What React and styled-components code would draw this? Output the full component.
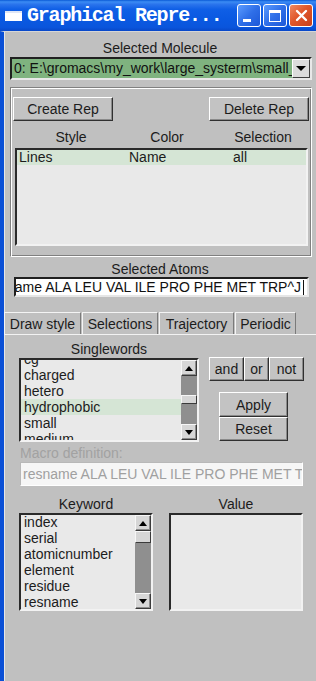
import React from "react";
import styled, { createGlobalStyle } from "styled-components";

const Global = createGlobalStyle`
  html, body { margin: 0; padding: 0; background: #c0c0c0; }
  body { font-family: "Liberation Sans", Arial, sans-serif; font-size: 14px; color: #1c1c1c; }
  * { box-sizing: border-box; }
`;

const Window = styled.div`
  width: 316px;
  height: 681px;
  display: flex;
  flex-direction: column;
  overflow: hidden;
`;

const TitleBar = styled.div`
  height: 31px;
  flex: none;
  display: flex;
  align-items: center;
  padding: 0 3px 0 5px;
  background: linear-gradient(
    to bottom,
    #0a5ad6 0%,
    #3b8cf4 6%,
    #2a74ec 14%,
    #0f5fe6 30%,
    #0a59e2 60%,
    #0a55dc 88%,
    #0848c8 100%
  );
`;

const AppIcon = styled.div`
  width: 17px;
  height: 10px;
  flex: none;
  margin-right: 5px;
  background: #ffffff;
  border-top: 2px solid #dfe6f5;
`;

const Title = styled.div`
  flex: 1;
  font-family: "Liberation Mono", "Courier New", monospace;
  font-weight: bold;
  font-size: 20px;
  letter-spacing: -1.2px;
  color: #ffffff;
  white-space: nowrap;
  overflow: hidden;
`;

const CapButtons = styled.div`
  display: flex;
  gap: 2px;
`;

const CapButton = styled.div`
  width: 24px;
  height: 23px;
  border: 1px solid #ffffff;
  border-radius: 3px;
  display: flex;
  align-items: ${(p) => (p.$kind === "min" ? "flex-end" : "center")};
  justify-content: ${(p) => (p.$kind === "min" ? "flex-start" : "center")};
  padding: ${(p) => (p.$kind === "min" ? "0 0 4px 5px" : "0")};
  background: ${(p) =>
    p.$kind === "close"
      ? "linear-gradient(135deg, #f08a62 0%, #e0572b 45%, #c8401c 100%)"
      : "linear-gradient(135deg, #5c9cff 0%, #2f6fe8 50%, #1d58d8 100%)"};
`;

const MinBar = styled.div`
  width: 8px;
  height: 3px;
  background: #ffffff;
`;

const MaxBox = styled.div`
  width: 12px;
  height: 12px;
  border: 1px solid #ffffff;
  border-top-width: 3px;
`;

const Body = styled.div`
  flex: 1;
  display: flex;
  flex-direction: column;
  background: #c0c0c0;
  border-left: 4px solid #0a4fd6;
  border-top: 1px solid #d6d6d6;
  box-shadow: inset 1px 0 0 #e6e6e6;
`;

const Label = styled.div`
  height: 16px;
  line-height: 16px;
  text-align: ${(p) => (p.$left ? "left" : "center")};
  color: ${(p) => (p.$muted ? "#a2a2a2" : "#1c1c1c")};
  margin-top: ${(p) => p.$mt || 0}px;
  margin-left: ${(p) => p.$ml || 0}px;
  white-space: nowrap;
`;

const Dropdown = styled.div`
  height: 23px;
  margin: 1px 4px 0 6px;
  display: flex;
  background: #7fb37f;
  border: 2px solid;
  border-color: #202020 #e8e8e8 #e8e8e8 #202020;
`;

const DropText = styled.div`
  flex: 1;
  padding-left: 2px;
  line-height: 19px;
  white-space: nowrap;
  overflow: hidden;
  color: #111;
`;

const DropArrow = styled.div`
  width: 18px;
  flex: none;
  background: #dcdcdc;
  border: 1px solid;
  border-color: #ffffff #404040 #404040 #ffffff;
  display: flex;
  align-items: center;
  justify-content: center;
  &::after {
    content: "";
    border-left: 5px solid transparent;
    border-right: 5px solid transparent;
    border-top: 5px solid #000;
  }
`;

const Frame = styled.div`
  margin: 7px 4px 0 6px;
  padding: 9px 2px 10px 2px;
  border: 1px solid;
  border-color: #808080 #ffffff #ffffff #808080;
  box-shadow: inset 1px 1px 0 #ffffff, inset -1px -1px 0 #808080;
  display: flex;
  flex-direction: column;
`;

const ButtonRow = styled.div`
  display: flex;
  justify-content: space-between;
`;

const Button = styled.div`
  width: ${(p) => p.$w}px;
  height: ${(p) => p.$h || 24}px;
  flex: none;
  display: flex;
  align-items: center;
  justify-content: center;
  background: #c3c3c3;
  border: 1px solid;
  border-color: #ffffff #303030 #303030 #ffffff;
  box-shadow: inset -1px -1px 0 #8a8a8a;
  color: #1c1c1c;
  white-space: nowrap;
`;

const HeaderGrid = styled.div`
  display: grid;
  grid-template-columns: 96px 96px 96px;
  padding-left: 10px;
  margin-top: 8px;
  height: 16px;
  line-height: 16px;
  text-align: center;
`;

const ListBox = styled.div`
  width: ${(p) => (p.$w ? `${p.$w}px` : "auto")};
  height: ${(p) => p.$h}px;
  margin: ${(p) => p.$m || "0"};
  background: #e9e9e9;
  border: 2px solid;
  border-color: #2a2a2a #f2f2f2 #f2f2f2 #2a2a2a;
  display: flex;
  overflow: hidden;
`;

const Items = styled.div`
  flex: 1;
  min-width: 0;
  display: flex;
  flex-direction: column;
  margin-top: ${(p) => p.$offset || 0}px;
`;

const Item = styled.div`
  height: 16px;
  flex: none;
  line-height: 16px;
  padding-left: 3px;
  white-space: nowrap;
  background: ${(p) => (p.$sel ? "#d5e5d5" : "transparent")};
`;

const RepRow = styled.div`
  display: grid;
  grid-template-columns: 110px 104px 1fr;
  height: 15px;
  line-height: 15px;
  padding-left: 2px;
  background: ${(p) => (p.$sel ? "#d5e5d5" : "transparent")};
`;

const ScrollBar = styled.div`
  width: 16px;
  flex: none;
  display: flex;
  flex-direction: column;
`;

const ArrowBtn = styled.div`
  height: 16px;
  flex: none;
  background: #d6d6d6;
  border: 1px solid;
  border-color: #f6f6f6 #3a3a3a #3a3a3a #f6f6f6;
  box-shadow: inset -1px -1px 0 #8c8c8c;
  display: flex;
  align-items: center;
  justify-content: center;
  &::after {
    content: "";
    border-left: 4px solid transparent;
    border-right: 4px solid transparent;
    ${(p) =>
      p.$down ? "border-top: 5px solid #000;" : "border-bottom: 5px solid #000;"}
  }
`;

const Track = styled.div`
  flex: 1;
  background: #8f8f8f;
  display: flex;
  flex-direction: column;
`;

const Thumb = styled.div`
  height: ${(p) => p.$h}px;
  margin-top: ${(p) => p.$top}px;
  flex: none;
  background: #d6d6d6;
  border: 1px solid;
  border-color: #f6f6f6 #3a3a3a #3a3a3a #f6f6f6;
`;

const Entry = styled.div`
  height: ${(p) => p.$h}px;
  width: ${(p) => p.$w}px;
  margin: ${(p) => p.$m};
  background: ${(p) => (p.$disabled ? "#f6f6f6" : "#ffffff")};
  border: ${(p) => (p.$disabled ? "1px" : "2px")} solid;
  border-color: ${(p) =>
    p.$disabled ? "#b8b8b8 #ffffff #ffffff #b8b8b8" : "#202020 #e6e6e6 #e6e6e6 #202020"};
  color: ${(p) => (p.$disabled ? "#a0a0a0" : "#111")};
  display: flex;
  align-items: center;
  justify-content: ${(p) => (p.$end ? "flex-end" : "flex-start")};
  padding: ${(p) => (p.$end ? "0 3px 0 0" : "0 0 0 2px")};
  overflow: hidden;
  white-space: nowrap;
`;

const Caret = styled.div`
  width: 1px;
  height: 15px;
  flex: none;
  margin-left: 2px;
  background: #111;
`;

const EntryText = styled.span`
  flex: none;
`;

const TabBar = styled.div`
  display: flex;
  gap: 1px;
  height: 22px;
  margin-top: 15px;
  flex: none;
`;

const Tab = styled.div`
  width: ${(p) => p.$w}px;
  height: 22px;
  flex: none;
  display: flex;
  align-items: center;
  justify-content: center;
  border-top: 1px solid #f4f4f4;
  border-left: 1px solid #f4f4f4;
  border-right: 1px solid #7a7a7a;
  background: #c0c0c0;
  white-space: nowrap;
`;

const Panel = styled.div`
  flex: 1;
  border-top: 1px solid #f2f2f2;
  display: flex;
  flex-direction: column;
`;

const TopRow = styled.div`
  display: flex;
  margin-top: 6px;
`;

const LeftCol = styled.div`
  width: 180px;
  margin-left: 15px;
  display: flex;
  flex-direction: column;
`;

const RightCol = styled.div`
  margin-left: 10px;
  padding-top: 16px;
  display: flex;
  flex-direction: column;
`;

const OpsRow = styled.div`
  display: flex;
`;

const ActionCol = styled.div`
  margin: 11px 0 0 10px;
  display: flex;
  flex-direction: column;
`;

const BottomGrid = styled.div`
  display: grid;
  grid-template-columns: 134px 134px;
  column-gap: 16px;
  margin: 10px 0 0 15px;
`;

const XIcon = () => (
  <svg width="13" height="13" viewBox="0 0 13 13">
    <path d="M2 2 L11 11 M11 2 L2 11" stroke="#fff" strokeWidth="2.4" strokeLinecap="round" />
  </svg>
);

const Scroll = ({ top, h }) => (
  <ScrollBar>
    <ArrowBtn />
    <Track>
      <Thumb $top={top} $h={h} />
    </Track>
    <ArrowBtn $down />
  </ScrollBar>
);

export default function App() {
  const singles = ["cg", "charged", "hetero", "hydrophobic", "small", "medium"];
  const keywords = ["index", "serial", "atomicnumber", "element", "residue", "resname"];
  return (
    <>
      <Global />
      <Window>
        <TitleBar>
          <AppIcon />
          <Title>Graphical Repre...</Title>
          <CapButtons>
            <CapButton $kind="min">
              <MinBar />
            </CapButton>
            <CapButton $kind="max">
              <MaxBox />
            </CapButton>
            <CapButton $kind="close">
              <XIcon />
            </CapButton>
          </CapButtons>
        </TitleBar>
        <Body>
          <Label $mt={8}>Selected Molecule</Label>
          <Dropdown>
            <DropText>{"0: E:\\gromacs\\my_work\\large_systerm\\small_system.gro"}</DropText>
            <DropArrow />
          </Dropdown>
          <Frame>
            <ButtonRow>
              <Button $w={100}>Create Rep</Button>
              <Button $w={100}>Delete Rep</Button>
            </ButtonRow>
            <HeaderGrid>
              <span>Style</span>
              <span>Color</span>
              <span>Selection</span>
            </HeaderGrid>
            <ListBox $h={98} $m="3px 1px 0 2px">
              <Items>
                <RepRow $sel>
                  <span>Lines</span>
                  <span>Name</span>
                  <span>all</span>
                </RepRow>
              </Items>
            </ListBox>
          </Frame>
          <Label $mt={4}>Selected Atoms</Label>
          <Entry $h={20} $w={295} $m="0 0 0 10px" $end>
            <EntryText>resname ALA LEU VAL ILE PRO PHE MET TRP^J</EntryText>
            <Caret />
          </Entry>
          <TabBar>
            <Tab $w={77}>Draw style</Tab>
            <Tab $w={76}>Selections</Tab>
            <Tab $w={75}>Trajectory</Tab>
            <Tab $w={61}>Periodic</Tab>
          </TabBar>
          <Panel>
            <TopRow>
              <LeftCol>
                <Label>Singlewords</Label>
                <ListBox $w={180} $h={84} $m="1px 0 0 0">
                  <Items $offset={-9}>
                    {singles.map((s) => (
                      <Item key={s} $sel={s === "hydrophobic"}>
                        {s}
                      </Item>
                    ))}
                  </Items>
                  <Scroll top={19} h={9} />
                </ListBox>
              </LeftCol>
              <RightCol>
                <OpsRow>
                  <Button $w={35} $h={24}>and</Button>
                  <Button $w={25} $h={24}>or</Button>
                  <Button $w={35} $h={24}>not</Button>
                </OpsRow>
                <ActionCol>
                  <Button $w={69} $h={25}>Apply</Button>
                  <Button $w={69} $h={24}>Reset</Button>
                </ActionCol>
              </RightCol>
            </TopRow>
            <Label $left $muted $mt={3} $ml={16}>Macro definition:</Label>
            <Entry $h={24} $w={283} $m="1px 0 0 16px" $disabled>
              <EntryText>resname ALA LEU VAL ILE PRO PHE MET TRP</EntryText>
            </Entry>
            <BottomGrid>
              <Label>Keyword</Label>
              <Label>Value</Label>
              <ListBox $h={98} $m="1px 0 0 0">
                <Items $offset={-1}>
                  {keywords.map((k) => (
                    <Item key={k}>{k}</Item>
                  ))}
                </Items>
                <Scroll top={0} h={12} />
              </ListBox>
              <ListBox $h={98} $m="1px 0 0 0" />
            </BottomGrid>
          </Panel>
        </Body>
      </Window>
    </>
  );
}
